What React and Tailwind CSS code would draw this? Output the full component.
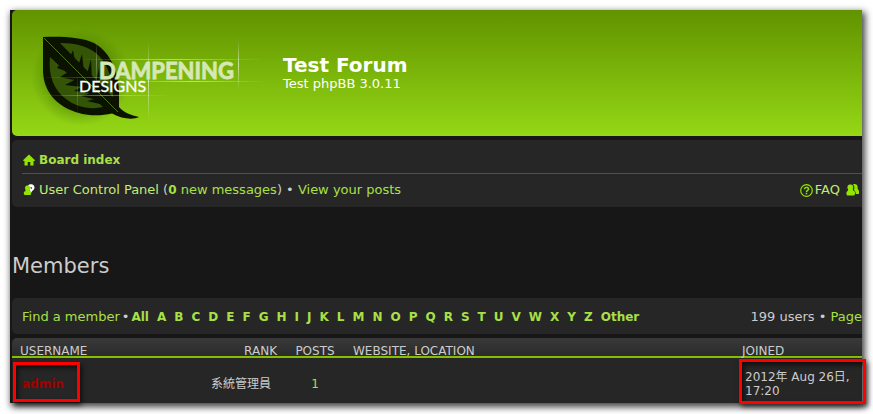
const letters = 'ABCDEFGHIJKLMNOPQRSTUVWXYZ'.split('')

const members = [
  { name: 'admin', rank: '系統管理員', posts: 1, joined: '2012年 Aug 26日, 17:20' },
]

function Logo() {
  return (
    <svg width="240" height="100" viewBox="30 28 240 100" role="img" aria-label="Dampening Designs" className="shrink-0">
      <defs>
        <radialGradient id="glow">
          <stop offset="0" stopColor="#274800" stopOpacity="0.7" />
          <stop offset="0.7" stopColor="#3c6a00" stopOpacity="0.35" />
          <stop offset="1" stopColor="#4a8000" stopOpacity="0" />
        </radialGradient>
        <linearGradient id="fadeX">
          <stop offset="0" stopColor="#fff" stopOpacity="0" />
          <stop offset="0.5" stopColor="#fff" stopOpacity="0.5" />
          <stop offset="1" stopColor="#fff" stopOpacity="0" />
        </linearGradient>
        <linearGradient id="fadeY" x2="0" y2="1">
          <stop offset="0" stopColor="#fff" stopOpacity="0" />
          <stop offset="0.5" stopColor="#fff" stopOpacity="0.6" />
          <stop offset="1" stopColor="#fff" stopOpacity="0" />
        </linearGradient>
      </defs>
      <ellipse cx="81" cy="77" rx="50" ry="49" fill="url(#glow)" />
      {/* leaf */}
      <path d="M43 37 C60 36 82 37 94 43 C112 53 119 75 119 92 L119 107 C124 113 131 115 139 117 C133 120 122 119 112 113.5 C100 116 85 117 68 109 C50 100 43 85 43 70 Z" fill="#0b1300" />
      <path d="M60 43 C78 43 90 47 99 56 C109 66 113 82 113 97 Z" fill="#345506" />
      <path d="M50 57 L103 107 C90 110 76 107 66 99 C54 90 48 76 50 57 Z" fill="#345506" />
      {/* veins */}
      <path d="M70 57 L73 50 L76 66 Z M78 66 L82 54 L84 72 Z M87 74 L91 59 L92 80 Z M96 82 L99 68 L100 86 Z M104 90 L106 80 L107 94 Z" fill="#0b1300" />
      <path d="M60 64 L57 68 L68 72 Z M68 72 L60 77 L74 80 Z M76 79 L65 85 L82 87 Z M83 86 L74 91 L90 93 Z M91 93 L81 96 L97 100 Z M98 98 L87 101 L104 105 Z" fill="#0b1300" />
      <path d="M44 38 L118 112" stroke="#4a6f14" strokeWidth="1" />
      {/* guide lines */}
      <g>
        <rect x="80" y="59" width="184" height="1" fill="url(#fadeX)" />
        <rect x="40" y="77" width="110" height="1" fill="url(#fadeX)" opacity="0.5" />
        <rect x="120" y="81" width="144" height="1" fill="url(#fadeX)" />
        <rect x="40" y="95" width="130" height="1" fill="url(#fadeX)" opacity="0.8" />
        <rect x="96" y="40" width="1" height="46" fill="url(#fadeY)" opacity="0.5" />
        <rect x="77" y="74" width="1" height="40" fill="url(#fadeY)" opacity="0.3" />
        <rect x="148" y="42" width="1" height="78" fill="url(#fadeY)" />
        <rect x="238" y="40" width="1" height="50" fill="url(#fadeY)" />
      </g>
      <text x="99" y="79" fill="#d6e8b4" stroke="#d6e8b4" strokeWidth="0.8" className="font-['Lato'] text-[22px] font-bold">DAMPENING</text>
      <text x="79" y="92" fill="#fff" stroke="#fff" strokeWidth="0.3" className="font-['Lato'] text-[16px]">DESIGNS</text>
    </svg>
  )
}

function HomeIcon() {
  return (
    <svg width="12" height="12" viewBox="0 0 12 12" fill="#93e400" aria-hidden="true">
      <path d="M6 0.5 L12 6.3 L11.4 7 H10.5 V11.5 H7.3 V8 H4.7 V11.5 H1.5 V7 H0.6 L0 6.3 Z" />
    </svg>
  )
}

function UserIcon() {
  return (
    <svg width="12" height="12" viewBox="0 0 12 12" aria-hidden="true">
      <path d="M5 1.8 C6.5 -0.2 9.5 0 11 1.8 C12.2 3.8 11.2 6 9.2 7 L8 9 L6.5 6 Z" fill="#fff" />
      <path d="M7.2 3 L9.2 3.4 L8.2 5.2 Z" fill="#262626" />
      <path d="M4.5 1.5 C7 1.5 7.8 3.5 6.8 5.5 C6.5 6.5 6.8 7 7.8 7.6 C8.5 8.5 8 10.5 7.5 11 H1.5 C0.5 10 0.5 8.5 1.5 7.6 C2.8 7 2.8 6.5 2.3 5.5 C1.5 3.5 2.2 1.5 4.5 1.5 Z" fill="#93e400" />
    </svg>
  )
}

function FaqIcon() {
  return (
    <svg width="13" height="13" viewBox="0 0 13 13" fill="none" stroke="#93e400" aria-hidden="true">
      <circle cx="6.5" cy="6.5" r="5.8" strokeWidth="1.2" />
      <path d="M4.5 5.2 C4.5 2.8 8.6 2.8 8.6 5 C8.6 6.4 6.5 6.2 6.5 8 M6.5 8.8 V10.2" strokeWidth="1.5" />
    </svg>
  )
}

function MembersIcon() {
  return (
    <svg width="13" height="12" viewBox="0 0 13 12" fill="#93e400" aria-hidden="true">
      <path d="M4.3 0.6 C7.2 0.6 7.8 3 6.9 5 C6.6 6 7.4 6.6 8.4 7.2 C9.4 8 9.2 10.5 8.2 11.6 H1.2 C0 10.5 0.2 8 1.2 7.2 C2.3 6.6 2.3 6 1.8 5 C0.9 3 1.6 0.6 4.3 0.6 Z" />
      <path d="M7 0.4 C9.5 -0.6 12.2 0.8 11.6 4 C11.4 5.5 13 6 13 7.5 V10 H9.8 C9.8 7.5 8.6 6.8 7.8 5.8 C8.8 4 8.4 1.6 7 0.4 Z" />
    </svg>
  )
}

export default function App() {
  return (
    <div className="bg-white pt-[10px] pr-[11px] pb-[11px] pl-[10px] font-['DejaVu_Sans','Noto_Sans_CJK_TC',sans-serif] text-[13px] leading-[16px] text-[#ccc]">
      <main className="bg-[#171717] pl-[2px] shadow-[2px_3px_7px_1px_rgba(0,0,0,0.75)]">
        <header className="flex items-start rounded-l-[5px] bg-linear-to-b from-[#619300] to-[#95d816] pt-[18px] pb-2 pl-[18px] text-white">
          <Logo />
          <div className="pt-[25px] pl-[13px]">
            <h1 className="text-[20px] leading-[24px] font-bold">Test Forum</h1>
            <p className="leading-[14px]">Test phpBB 3.0.11</p>
          </div>
        </header>

        <nav className="mt-1 rounded-l-[5px] bg-[#262626] pt-3 pb-[9px] pl-[10px] text-[#a9e046]">
          <div className="flex items-center gap-1 border-b border-[#505050] pb-[5px] pl-px">
            <HomeIcon />
            <a href="#index" className="text-[12px] font-bold">Board index</a>
          </div>
          <div className="flex items-center justify-between pt-2 pl-px">
            <div className="flex items-center gap-1">
              <UserIcon />
              <span className="text-[#ccc]">
                <a href="#ucp" className="text-[#c3ea75]">User Control Panel</a> (
                <a href="#pm" className="text-[#a9e046]"><b className="text-[12px]">0</b> new messages</a>) •{' '}
                <a href="#posts" className="text-[#a9e046]">View your posts</a>
              </span>
            </div>
            <div className="flex items-center gap-[2px] pr-[3px]">
              <FaqIcon />
              <a href="#faq" className="pr-1 text-[#c3ea75]">FAQ</a>
              <a href="#members" aria-label="Members"><MembersIcon /></a>
            </div>
          </div>
        </nav>

        <h2 className="pt-[47px] pb-5 text-[21px] leading-[24px]">Members</h2>

        <div className="flex justify-between rounded-l-[5px] bg-[#262626] pt-[11px] pb-[9px] pl-[10px] whitespace-nowrap">
          <div className="flex text-[#a9e046]">
            <a href="#find">Find a member</a>
            <span className="px-[2px] text-[#ccc]">•</span>
            <div className="flex gap-2 text-[12px] font-bold">
              <a href="#all">All</a>
              {letters.map((l) => (
                <a key={l} href={`#${l}`}>{l}</a>
              ))}
              <a href="#other">Other</a>
            </div>
          </div>
          <div>
            199 users • <a href="#page" className="text-[#a9e046]">Page</a>
          </div>
        </div>

        <table className="mt-1 w-full table-fixed border-separate border-spacing-0 text-left">
          <thead className="text-[12px] leading-[9px] uppercase">
            <tr className="bg-linear-to-b from-[#393939] to-[#2a2a2a] [&>th]:border-b-2 [&>th]:border-[#84bf00] [&>th]:pt-[9px] [&>th]:font-normal">
              <th className="w-[150px] rounded-tl-[5px] pl-2">Username</th>
              <th className="w-[115px] text-right">Rank</th>
              <th className="w-[76px] text-center">Posts</th>
              <th>Website, Location</th>
              <th className="w-[120px]">Joined</th>
            </tr>
          </thead>
          <tbody className="bg-[#262626] text-[12px] leading-[14px]">
            {members.map((m) => (
              <tr key={m.name} className="[&>td]:pt-3 [&>td]:pb-[5px]">
                <td className="relative pl-[10px]">
                  <a href="#admin" className="font-bold text-[#a00000]">{m.name}</a>
                  <span className="absolute top-1 left-px h-[40px] w-[67px] border-3 border-[#f00] shadow-[2px_3px_5px_rgba(0,0,0,0.6),inset_2px_3px_5px_rgba(0,0,0,0.6)]" />
                </td>
                <td className="pr-[6px] text-right">{m.rank}</td>
                <td className="text-center text-[#a9e046]">{m.posts}</td>
                <td></td>
                <td className="relative pl-[3px]">
                  {m.joined}
                  <span className="absolute top-px -right-1 -bottom-px -left-[3px] border-3 border-[#f00] shadow-[2px_3px_5px_rgba(0,0,0,0.6),inset_2px_3px_5px_rgba(0,0,0,0.6)]" />
                </td>
              </tr>
            ))}
          </tbody>
        </table>
      </main>
    </div>
  )
}
